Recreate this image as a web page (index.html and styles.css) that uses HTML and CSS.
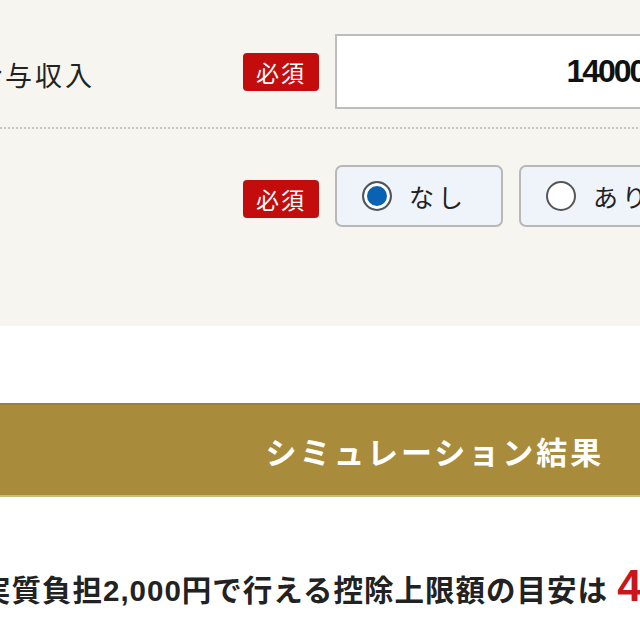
FILE: index.html
```html
<!DOCTYPE html>
<html lang="ja">

<head>
    <meta charset="UTF-8">
    <meta name="viewport" content="width=device-width, initial-scale=1.0">
    <title>ふるさと納税 控除上限額シミュレーション</title>
    <link rel="stylesheet" href="styles.css">
</head>

<body>
    <div class="page">
        <div class="form">
            <div class="row">
                <div class="label">給与収入</div>
                <span class="required">必須</span>
                <input class="income" type="text" value="1400000">
            </div>
            <div class="row">
                <div class="label"></div>
                <span class="required">必須</span>
                <div class="choices">
                    <label class="choice"><input type="radio" name="spouse" checked><span>なし</span></label>
                    <label class="choice"><input type="radio" name="spouse"><span>あり</span></label>
                </div>
            </div>
        </div>

        <h2 class="result-head">シミュレーション結果</h2>

        <p class="result-body">実質負担2,000円で行える控除上限額の目安は <span class="amount">42,000</span>円</p>
    </div>
</body>

</html>
```

FILE: styles.css
```css
html,
body {
    margin: 0;
    overflow: hidden;
    background-color: white;
}

body {
    font-family: "Noto Sans CJK JP", sans-serif;
    color: #222;
}

.page {
    width: 1000px;
    margin-left: -65px;
}

.form {
    background-color: #f7f5f0;
    padding: 16px 41px 63px;
}

.row {
    display: flex;
    align-items: center;
    padding: 18px 0;
    border-bottom: 2px dotted #c4c4c4;
}

.row:last-child {
    padding: 36px 0;
    border-bottom: 0;
}

.label {
    width: 267px;
    margin-left: -1px;
    margin-right: 1px;
    padding-top: 6px;
    font-size: 27px;
    letter-spacing: 3px;
}

.required {
    width: 76px;
    height: 38px;
    margin-right: 16px;
    border-radius: 4px;
    background-color: #c30d0d;
    color: white;
    font-size: 23px;
    letter-spacing: 2px;
    display: flex;
    justify-content: center;
    align-items: center;
}

.row:last-child .required {
    margin-top: 6px;
}

.income {
    width: 380px;
    height: 75px;
    box-sizing: border-box;
    padding: 0 36px 0 20px;
    border: 2px solid #bdbdbd;
    background-color: white;
    text-align: right;
    font-family: "Liberation Sans", sans-serif;
    font-size: 32px;
    font-weight: bold;
    letter-spacing: -2px;
    color: #111;
}

.choices {
    display: flex;
    gap: 16px;
}

.choice {
    width: 168px;
    height: 62px;
    box-sizing: border-box;
    padding-left: 25px;
    border: 2px solid #b8b8b8;
    border-radius: 7px;
    background-color: #eef4fa;
    display: flex;
    align-items: center;
    gap: 17px;
    font-size: 25px;
    letter-spacing: 4px;
}

.choice input {
    appearance: none;
    margin: 0;
    width: 30px;
    height: 30px;
    border: 2px solid #555;
    border-radius: 50%;
    background-color: white;
}

.choice input:checked {
    background-color: #0a62b3;
    box-shadow: inset 0 0 0 3px white;
}

.result-head {
    margin: 77px 0 0;
    height: 90px;
    border-top: 2px solid #9c7f3a;
    border-bottom: 2px solid #c9bd7c;
    background-color: #a88b3b;
    color: white;
    font-size: 31px;
    font-weight: bold;
    letter-spacing: 3px;
    display: flex;
    justify-content: center;
    align-items: center;
}

.result-body {
    margin: 64px 0 0;
    padding-left: 46px;
    white-space: nowrap;
    font-family: "Liberation Sans", "Noto Sans CJK JP", sans-serif;
    font-size: 29.5px;
    font-weight: bold;
    letter-spacing: 1px;
}

.amount {
    color: #c8161d;
    font-size: 44px;
}
```
